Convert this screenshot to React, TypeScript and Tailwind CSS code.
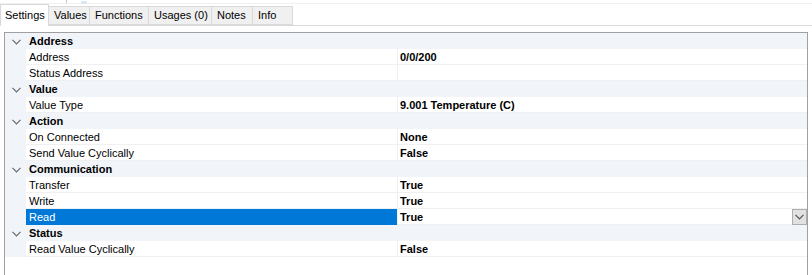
import { ReactNode } from 'react';

type Prop = { name: string; value: string; selected?: boolean };
type Category = { title: string; props: Prop[] };

const CATEGORIES: Category[] = [
  {
    title: 'Address',
    props: [
      { name: 'Address', value: '0/0/200' },
      { name: 'Status Address', value: '' },
    ],
  },
  { title: 'Value', props: [{ name: 'Value Type', value: '9.001 Temperature (C)' }] },
  {
    title: 'Action',
    props: [
      { name: 'On Connected', value: 'None' },
      { name: 'Send Value Cyclically', value: 'False' },
    ],
  },
  {
    title: 'Communication',
    props: [
      { name: 'Transfer', value: 'True' },
      { name: 'Write', value: 'True' },
      { name: 'Read', value: 'True', selected: true },
    ],
  },
  { title: 'Status', props: [{ name: 'Read Value Cyclically', value: 'False' }] },
];

const TABS = [
  { label: 'Values', w: 'w-[41px]' },
  { label: 'Functions', w: 'w-[59px]' },
  { label: 'Usages (0)', w: 'w-[63px]' },
  { label: 'Notes', w: 'w-[41px]' },
  { label: 'Info', w: 'w-[40px]' },
];

function Chevron({ className }: { className?: string }) {
  return (
    <svg width="9" height="6" viewBox="0 0 9 6" className={className}>
      <path d="M0.5 0.8 L4.5 4.8 L8.5 0.8" fill="none" stroke="currentColor" strokeWidth="1.2" />
    </svg>
  );
}

function CategoryRow({ title }: { title: string }) {
  return (
    <div className="flex h-4 items-center bg-[#f1f4f9] pt-px">
      <div className="flex w-[21px] justify-center pl-[1px] text-[#6b6b6b]">
        <Chevron />
      </div>
      <span className="pl-[3px] font-bold text-black">{title}</span>
    </div>
  );
}

function PropRow({ prop }: { prop: Prop }) {
  return (
    <div className="flex h-4">
      <div className="w-[21px] shrink-0 bg-[#f1f4f9]" />
      <div
        className={
          prop.selected
            ? 'flex w-[371px] shrink-0 items-center bg-[#0078d7] pl-[3px] pt-px text-white'
            : 'flex w-[371px] shrink-0 items-center border-b border-[#f0f0f0] pl-[3px] pt-px text-black'
        }
      >
        {prop.name}
      </div>
      <div className="w-px shrink-0 bg-[#f0f0f0]" />
      <div className="flex flex-1 items-center border-b border-[#f0f0f0] pl-[2px] font-bold text-black">
        <span className="flex-1 pt-px">{prop.value}</span>
        {prop.selected && (
          <span className="flex h-4 w-[15px] items-center justify-center border border-[#adadad] bg-[#e1e1e1] text-[#555]">
            <Chevron />
          </span>
        )}
      </div>
    </div>
  );
}

function Tab({ children, active, w }: { children: ReactNode; active?: boolean; w: string }) {
  if (active) {
    return (
      <div className={`z-10 -mb-px flex h-[22px] items-start border border-b-0 border-[#d9d9d9] bg-white pl-[4px] pt-[5px] ${w}`}>
        {children}
      </div>
    );
  }
  return (
    <div className={`flex h-[19px] items-center border border-l-0 border-[#d9d9d9] bg-[#f0f0f0] pl-[5px] ${w}`}>
      {children}
    </div>
  );
}

export default function App() {
  return (
    <div className="h-[275px] w-[812px] overflow-hidden bg-white font-['Liberation_Sans',Arial,sans-serif] text-[11px] leading-none">
      <div className="flex h-[4px] border-b border-[#f0f0f0]">
        <div className="w-[66px]" />
        <div className="w-px bg-[#c8c8c8]" />
        <div className="ml-[14px] mt-[1px] h-[3px] w-[6px] bg-[#dbe7f5]" />
      </div>
      <div className="flex h-[22px] items-end border-b border-[#d9d9d9]">
        <Tab active w="w-[49px]">
          Settings
        </Tab>
        {TABS.map((t) => (
          <Tab key={t.label} w={t.w}>
            {t.label}
          </Tab>
        ))}
      </div>
      <div className="mx-[4px] mt-[6px] h-[260px] border-l border-r border-t border-[#a0a0a0]">
        {CATEGORIES.map((c) => (
          <div key={c.title}>
            <CategoryRow title={c.title} />
            {c.props.map((p) => (
              <PropRow key={p.name} prop={p} />
            ))}
          </div>
        ))}
      </div>
    </div>
  );
}
